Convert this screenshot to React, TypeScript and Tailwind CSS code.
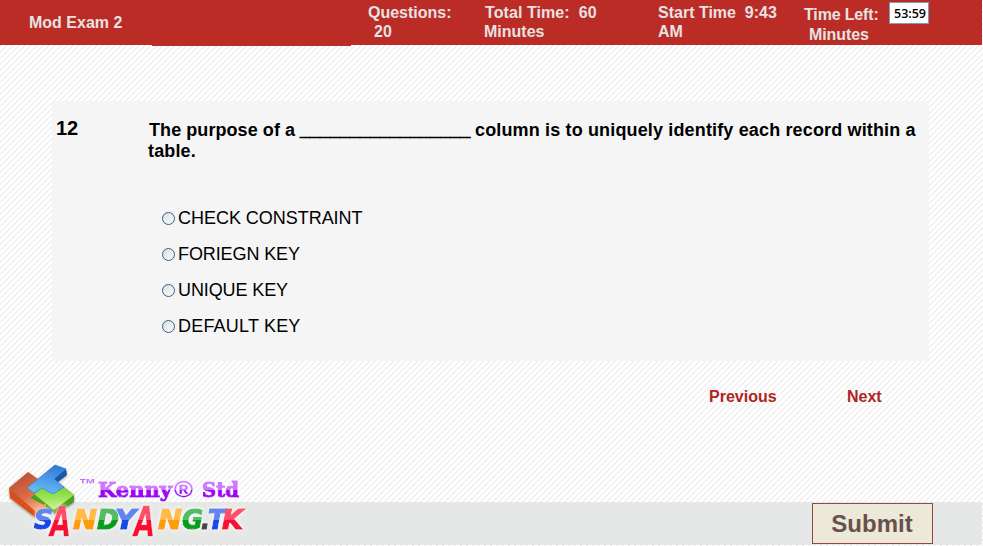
import React from "react";

const OPTIONS = [
  { label: "CHECK CONSTRAINT", tracking: "tracking-[-0.03px]" },
  { label: "FORIEGN KEY", tracking: "tracking-[-0.1px]" },
  { label: "UNIQUE KEY", tracking: "tracking-[-0.1px]" },
  { label: "DEFAULT KEY", tracking: "tracking-[0.2px]" },
];

const LETTERS = [
  { ch: "S", x: 34, w: 19, c: "blue" },
  { ch: "A", x: 50, w: 21, c: "red", big: true },
  { ch: "N", x: 73, w: 24, c: "orange" },
  { ch: "D", x: 97, w: 22, c: "green" },
  { ch: "Y", x: 115, w: 21, c: "blue" },
  { ch: "A", x: 134, w: 21, c: "red", big: true },
  { ch: "N", x: 158, w: 24, c: "orange" },
  { ch: "G", x: 182, w: 21, c: "green" },
  { ch: ".", x: 201, w: 9, c: "dark" },
  { ch: "T", x: 208, w: 17, c: "blue" },
  { ch: "K", x: 222, w: 21, c: "red" },
];

const GLOSS: [string, string, string][] = [
  ["blue", "#5f86f0", "#1646e8"],
  ["red", "#ff5068", "#fa0a32"],
  ["orange", "#ffbc48", "#ff9d00"],
  ["green", "#52bc62", "#00a01c"],
  ["dark", "#555555", "#444444"],
];

function Watermark() {
  return (
    <svg className="absolute left-0 top-[460px]" width="256" height="86" viewBox="0 460 256 86">
      <defs>
        {GLOSS.map(([id, top, bottom]) => (
          <linearGradient key={id} id={id} gradientUnits="userSpaceOnUse" x1="0" y1="506" x2="0" y2="534">
            <stop offset="0.49" stopColor={top} />
            <stop offset="0.51" stopColor={bottom} />
          </linearGradient>
        ))}
        <linearGradient id="violet" gradientUnits="userSpaceOnUse" x1="0" y1="480" x2="0" y2="500">
          <stop offset="0.48" stopColor="#cf78ff" />
          <stop offset="0.52" stopColor="#a300f5" />
        </linearGradient>
        <linearGradient id="brick" x1="0.3" y1="0" x2="0.8" y2="1">
          <stop offset="0" stopColor="#b64f36" />
          <stop offset="0.5" stopColor="#dc6a45" />
          <stop offset="1" stopColor="#ffc49a" />
        </linearGradient>
        <linearGradient id="sky" x1="0.7" y1="0" x2="0.4" y2="1">
          <stop offset="0" stopColor="#2f78d8" />
          <stop offset="1" stopColor="#69bdf8" />
        </linearGradient>
        <linearGradient id="lime" x1="0" y1="0" x2="0" y2="1">
          <stop offset="0" stopColor="#72d534" />
          <stop offset="1" stopColor="#cdf58c" />
        </linearGradient>
        <filter id="glow" x="-10%" y="-40%" width="120%" height="180%">
          <feDropShadow dx="0" dy="0" stdDeviation="2.2" floodColor="#ffffff" floodOpacity="1" />
        </filter>
        <filter id="shade" x="-20%" y="-20%" width="140%" height="140%">
          <feDropShadow dx="0" dy="1" stdDeviation="1" floodColor="#000000" floodOpacity="0.4" />
        </filter>
      </defs>
      <g filter="url(#shade)">
        <path d="M34 493 L42 489 L53 494 L64 487 L74 495 L74 502 L56 514 L44 506 L30 498 Z" fill="#4f9e1c" />
        <path d="M34 494 L42 488 L53 494 L64 487 L74 495 L54 510 Z" fill="url(#lime)" />
        <path d="M9 488 L28 472 L38 479 L27 488 L35 494 L30 498 L46 506 L35 516 Z" fill="url(#brick)" />
        <path d="M9 488 L35 511 L35 517 L10 498 Z" fill="#d9501c" />
        <path d="M35 511 L46 503 L46 508 L35 517 Z" fill="#f69468" />
        <path d="M54 479 L66 469 L67 475 L58 482 Z" fill="#1556a8" />
        <path d="M27 488 L55 465 L66 469 L54 479 L64 487 L53 494 L42 488 L34 493 Z" fill="url(#sky)" stroke="#2765b8" strokeWidth="0.5" />
      </g>
      <g filter="url(#glow)" fontWeight="700">
        <text x="79" y="489" fontSize="15" fill="#c56cff" fontFamily="'Liberation Sans', sans-serif" textLength="17" lengthAdjust="spacingAndGlyphs">™</text>
        <g fontFamily="'DejaVu Serif', serif" fontSize="21" fill="url(#violet)" stroke="url(#violet)" strokeWidth="1.1">
          <text x="98" y="497" textLength="74" lengthAdjust="spacingAndGlyphs">Kenny</text>
          <text x="174" y="497" fontSize="22" strokeWidth="0.3" fontFamily="'Liberation Sans', sans-serif" textLength="19" lengthAdjust="spacingAndGlyphs">®</text>
          <text x="202" y="497" textLength="37" lengthAdjust="spacingAndGlyphs">Std</text>
        </g>
      </g>
      <g filter="url(#glow)" fontFamily="'DejaVu Sans', sans-serif" fontWeight="700" fontStyle="italic">
        {LETTERS.map((l, i) => (
          <text
            key={i}
            x={l.x}
            y={l.big ? 536 : 529}
            fontSize={l.big ? 41 : 27}
            textLength={l.w}
            lengthAdjust="spacingAndGlyphs"
            fill={`url(#${l.c})`}
            stroke={`url(#${l.c})`}
            strokeWidth={l.big ? 0.3 : 1.2}
          >
            {l.ch}
          </text>
        ))}
      </g>
    </svg>
  );
}

export default function App() {
  return (
    <div className="relative flex h-[546px] w-[983px] flex-col overflow-hidden bg-white bg-[repeating-linear-gradient(135deg,#ffffff_0px,#ffffff_2.2px,#e8e8e8_3.2px,#ffffff_4.2426px)] font-['Liberation_Sans',Arial,sans-serif]">
      <header className="flex h-[45px] w-[982px] shrink-0 items-start bg-[#bb2c27] text-base font-bold leading-[19px] text-[#e6e3e1]">
        <h1 className="ml-[29px] mt-[13px] w-[339px]">Mod Exam 2</h1>
        <div className="mt-[3px] w-[117px]">
          <p>Questions:</p>
          <p className="pl-1.5">20</p>
        </div>
        <div className="mt-[3px] w-[173px] whitespace-pre">
          <p className="tracking-[0.08px]">{"Total Time:  60"}</p>
          <p className="-ml-px">Minutes</p>
        </div>
        <div className="mt-[3px] w-[146px] whitespace-pre">
          <p>{"Start Time  9:43"}</p>
          <p>AM</p>
        </div>
        <div className="mt-[5px] w-[85px] leading-5">
          <p className="tracking-[-0.15px]">Time Left:</p>
          <p className="pl-[5px] tracking-[-0.1px]">Minutes</p>
        </div>
        <div className="mt-0.5 flex h-[22px] w-10 items-center justify-center border border-[#7f9db9] bg-white font-['Open_Sans',sans-serif] text-[12.5px] font-semibold text-black">
          <span className="whitespace-nowrap pl-0.5">53:59</span>
        </div>
      </header>
      <div className="ml-[152px] h-px w-[199px] shrink-0 bg-[#bb2c27]" />

      <main className="ml-[52px] mt-[55px] flex h-[260px] w-[877px] shrink-0 bg-[#f5f5f5] text-black">
        <div className="w-[96px] pl-1 pt-[15px] text-xl font-bold leading-6">12</div>
        <div className="flex flex-col">
          <div className="h-[98px] whitespace-nowrap pt-[19px] text-lg font-bold leading-[21px]">
            <p className="flex">
              <span className="w-[152px] pl-px tracking-[0.07px]">The purpose of a</span>
              <span className="w-[175px] [-webkit-text-stroke:0.8px_black]">_________________</span>
              <span className="tracking-[0.15px]">column is to uniquely identify each record within a</span>
            </p>
            <p className="tracking-[0.15px]">table.</p>
          </div>
          <div className="flex flex-col pl-3.5 text-lg leading-9">
            {OPTIONS.map((option) => (
              <label key={option.label} className="flex h-9 items-center whitespace-nowrap">
                <span className="mr-[3px] mt-0.5 size-[13px] rounded-full border border-[#31608f] bg-gradient-to-br from-[#dcdcd7] to-white" />
                <span className={`pt-0.5 ${option.tracking}`}>{option.label}</span>
              </label>
            ))}
          </div>
        </div>
      </main>

      <nav className="mt-[26px] flex h-5 shrink-0 pl-[709px] text-base font-bold leading-5 text-[#b02522]">
        <a className="w-[138px]">Previous</a>
        <a>Next</a>
      </nav>

      <footer className="mt-[95px] flex h-[43px] w-[982px] shrink-0 items-start justify-end bg-[#e6e8e7] pr-[49px] pt-px">
        <button className="h-[41px] w-[121px] border border-[#944548] bg-[#ece9d8] pr-px text-2xl font-bold leading-[39px] text-[#68504d]">
          Submit
        </button>
      </footer>
      <Watermark />
    </div>
  );
}
